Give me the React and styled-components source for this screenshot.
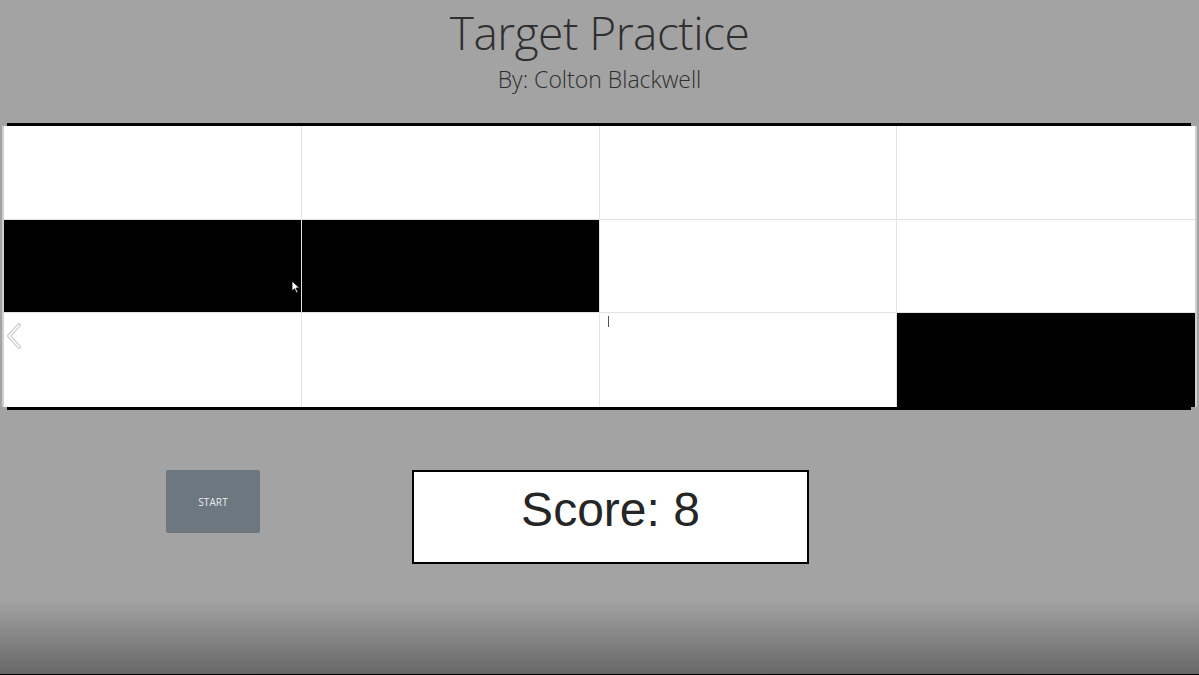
import React from "react";
import styled, { createGlobalStyle } from "styled-components";

const Global = createGlobalStyle`
  html, body { margin: 0; padding: 0; }
  body { font-family: "Open Sans", "Noto Sans", sans-serif; }
`;

const Page = styled.div`
  position: relative;
  min-height: 675px;
  height: 675px;
  overflow: hidden;
  display: flex;
  flex-direction: column;
  background: linear-gradient(
    to bottom,
    #a3a3a3 0,
    #a3a3a3 600px,
    #676767 674px,
    #000 674px,
    #000 675px
  );
`;

const Header = styled.header`
  display: flex;
  flex-direction: column;
  align-items: center;
  color: #2f2f2f;
  padding-top: 2px;
`;

const Title = styled.h1`
  margin: 0;
  font-family: "Open Sans", "Noto Sans", sans-serif;
  font-weight: 300;
  font-size: 46px;
  line-height: 60px;
  letter-spacing: -0.5px;
`;

const Subtitle = styled.div`
  margin-top: 2px;
  font-family: "Open Sans", "Noto Sans", sans-serif;
  font-weight: 300;
  font-size: 23px;
  line-height: 30px;
`;

const BoardFrame = styled.section`
  margin: 29px 8px 0 7px;
  border-top: 3px solid #000;
  border-bottom: 3px solid #000;
`;

const Board = styled.div`
  position: relative;
  margin: 0 -6px 0 -5px;
  border-left: 2px solid #cfcfcf;
  border-right: 2px solid #cfcfcf;
  display: grid;
  grid-template-columns: repeat(4, 1fr);
  grid-template-rows: repeat(3, 1fr);
  height: 281px;
  background: #fff;
`;

const Cell = styled.div`
  position: relative;
  background: ${(p) => (p.$on ? "#000" : "#fff")};
  border-right: ${(p) => (p.$last ? "none" : "1px solid #e3e3e3")};
  border-bottom: ${(p) => (p.$bottom ? "none" : "1px solid #e3e3e3")};
`;

const Chevron = styled.svg`
  position: absolute;
  left: 1px;
  top: 10px;
`;

const Caret = styled.span`
  position: absolute;
  left: 8px;
  top: 3px;
  width: 1px;
  height: 11px;
  background: #555;
`;

const Cursor = styled.svg`
  position: absolute;
  left: 287px;
  top: 60px;
`;

const Controls = styled.div`
  display: flex;
  align-items: flex-start;
  padding: 60px 0 0 166px;
  gap: 152px;
`;

const StartButton = styled.button`
  width: 94px;
  height: 63px;
  border: none;
  border-radius: 2px;
  background: #6c7780;
  color: #e8ecef;
  font-family: "Open Sans", "Noto Sans", sans-serif;
  font-size: 10px;
  letter-spacing: 0.1px;
  padding: 0;
  cursor: pointer;
`;

const ScoreBox = styled.div`
  box-sizing: border-box;
  width: 397px;
  height: 94px;
  border: 2px solid #000;
  background: #fff;
  display: flex;
  justify-content: center;
  padding-top: 8px;
  font-family: "Liberation Sans", Arial, sans-serif;
  font-size: 48px;
  line-height: 60px;
  color: #262626;
`;

const cells = [
  [0, 0, 0, 0],
  [1, 1, 0, 0],
  [0, 0, 0, 1],
];

export default function App() {
  return (
    <>
      <Global />
      <Page>
        <Header>
          <Title>Target Practice</Title>
          <Subtitle>By: Colton Blackwell</Subtitle>
        </Header>
        <BoardFrame>
          <Board>
            {cells.map((row, r) =>
              row.map((on, c) => (
                <Cell key={`${r}-${c}`} $on={!!on} $last={c === 3} $bottom={r === 2}>
                  {r === 2 && c === 0 && (
                    <Chevron width="18" height="28" viewBox="0 0 18 28">
                      <polyline points="14,2 4,13 14,24" fill="none" stroke="#cdcdcd" strokeWidth="4" strokeLinejoin="round" strokeLinecap="round" />
                      <polyline points="14,2 4,13 14,24" fill="none" stroke="#fff" strokeWidth="1.5" strokeLinejoin="round" strokeLinecap="round" />
                    </Chevron>
                  )}
                  {r === 2 && c === 2 && <Caret />}
                  {r === 1 && c === 0 && (
                    <Cursor width="10" height="14" viewBox="0 0 10 14">
                      <path d="M1 1 L1 11 L3.5 8.7 L5.5 13 L7 12.3 L5 8 L8.5 8 Z" fill="#fff" stroke="#000" strokeWidth="0.8" />
                    </Cursor>
                  )}
                </Cell>
              ))
            )}
          </Board>
        </BoardFrame>
        <Controls>
          <StartButton>START</StartButton>
          <ScoreBox>Score: 8</ScoreBox>
        </Controls>
      </Page>
    </>
  );
}
